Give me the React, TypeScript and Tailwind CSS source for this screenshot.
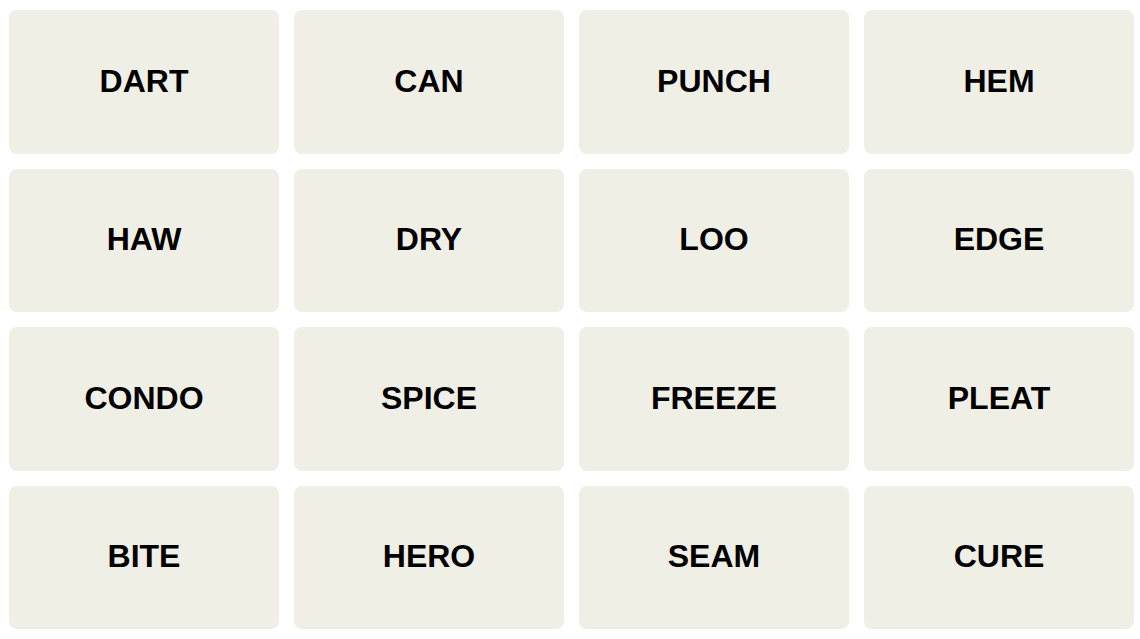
import React from "react";

const words = [
  "DART", "CAN", "PUNCH", "HEM",
  "HAW", "DRY", "LOO", "EDGE",
  "CONDO", "SPICE", "FREEZE", "PLEAT",
  "BITE", "HERO", "SEAM", "CURE",
];

export default function App() {
  return (
    <div className="w-[1140px] h-[639px] bg-white pl-[9px] pt-[10px]">
      <div className="w-[1125px] h-[619px] grid grid-cols-4 grid-rows-4 gap-x-[15px] gap-y-[15px]">
        {words.map((w) => (
          <div
            key={w}
            className="rounded-[8px] bg-[#efefe6] flex items-center justify-center pb-[2px] text-black font-bold text-[32px]"
            style={{ fontFamily: '"Liberation Sans", Arial, sans-serif' }}
          >
            {w}
          </div>
        ))}
      </div>
    </div>
  );
}
